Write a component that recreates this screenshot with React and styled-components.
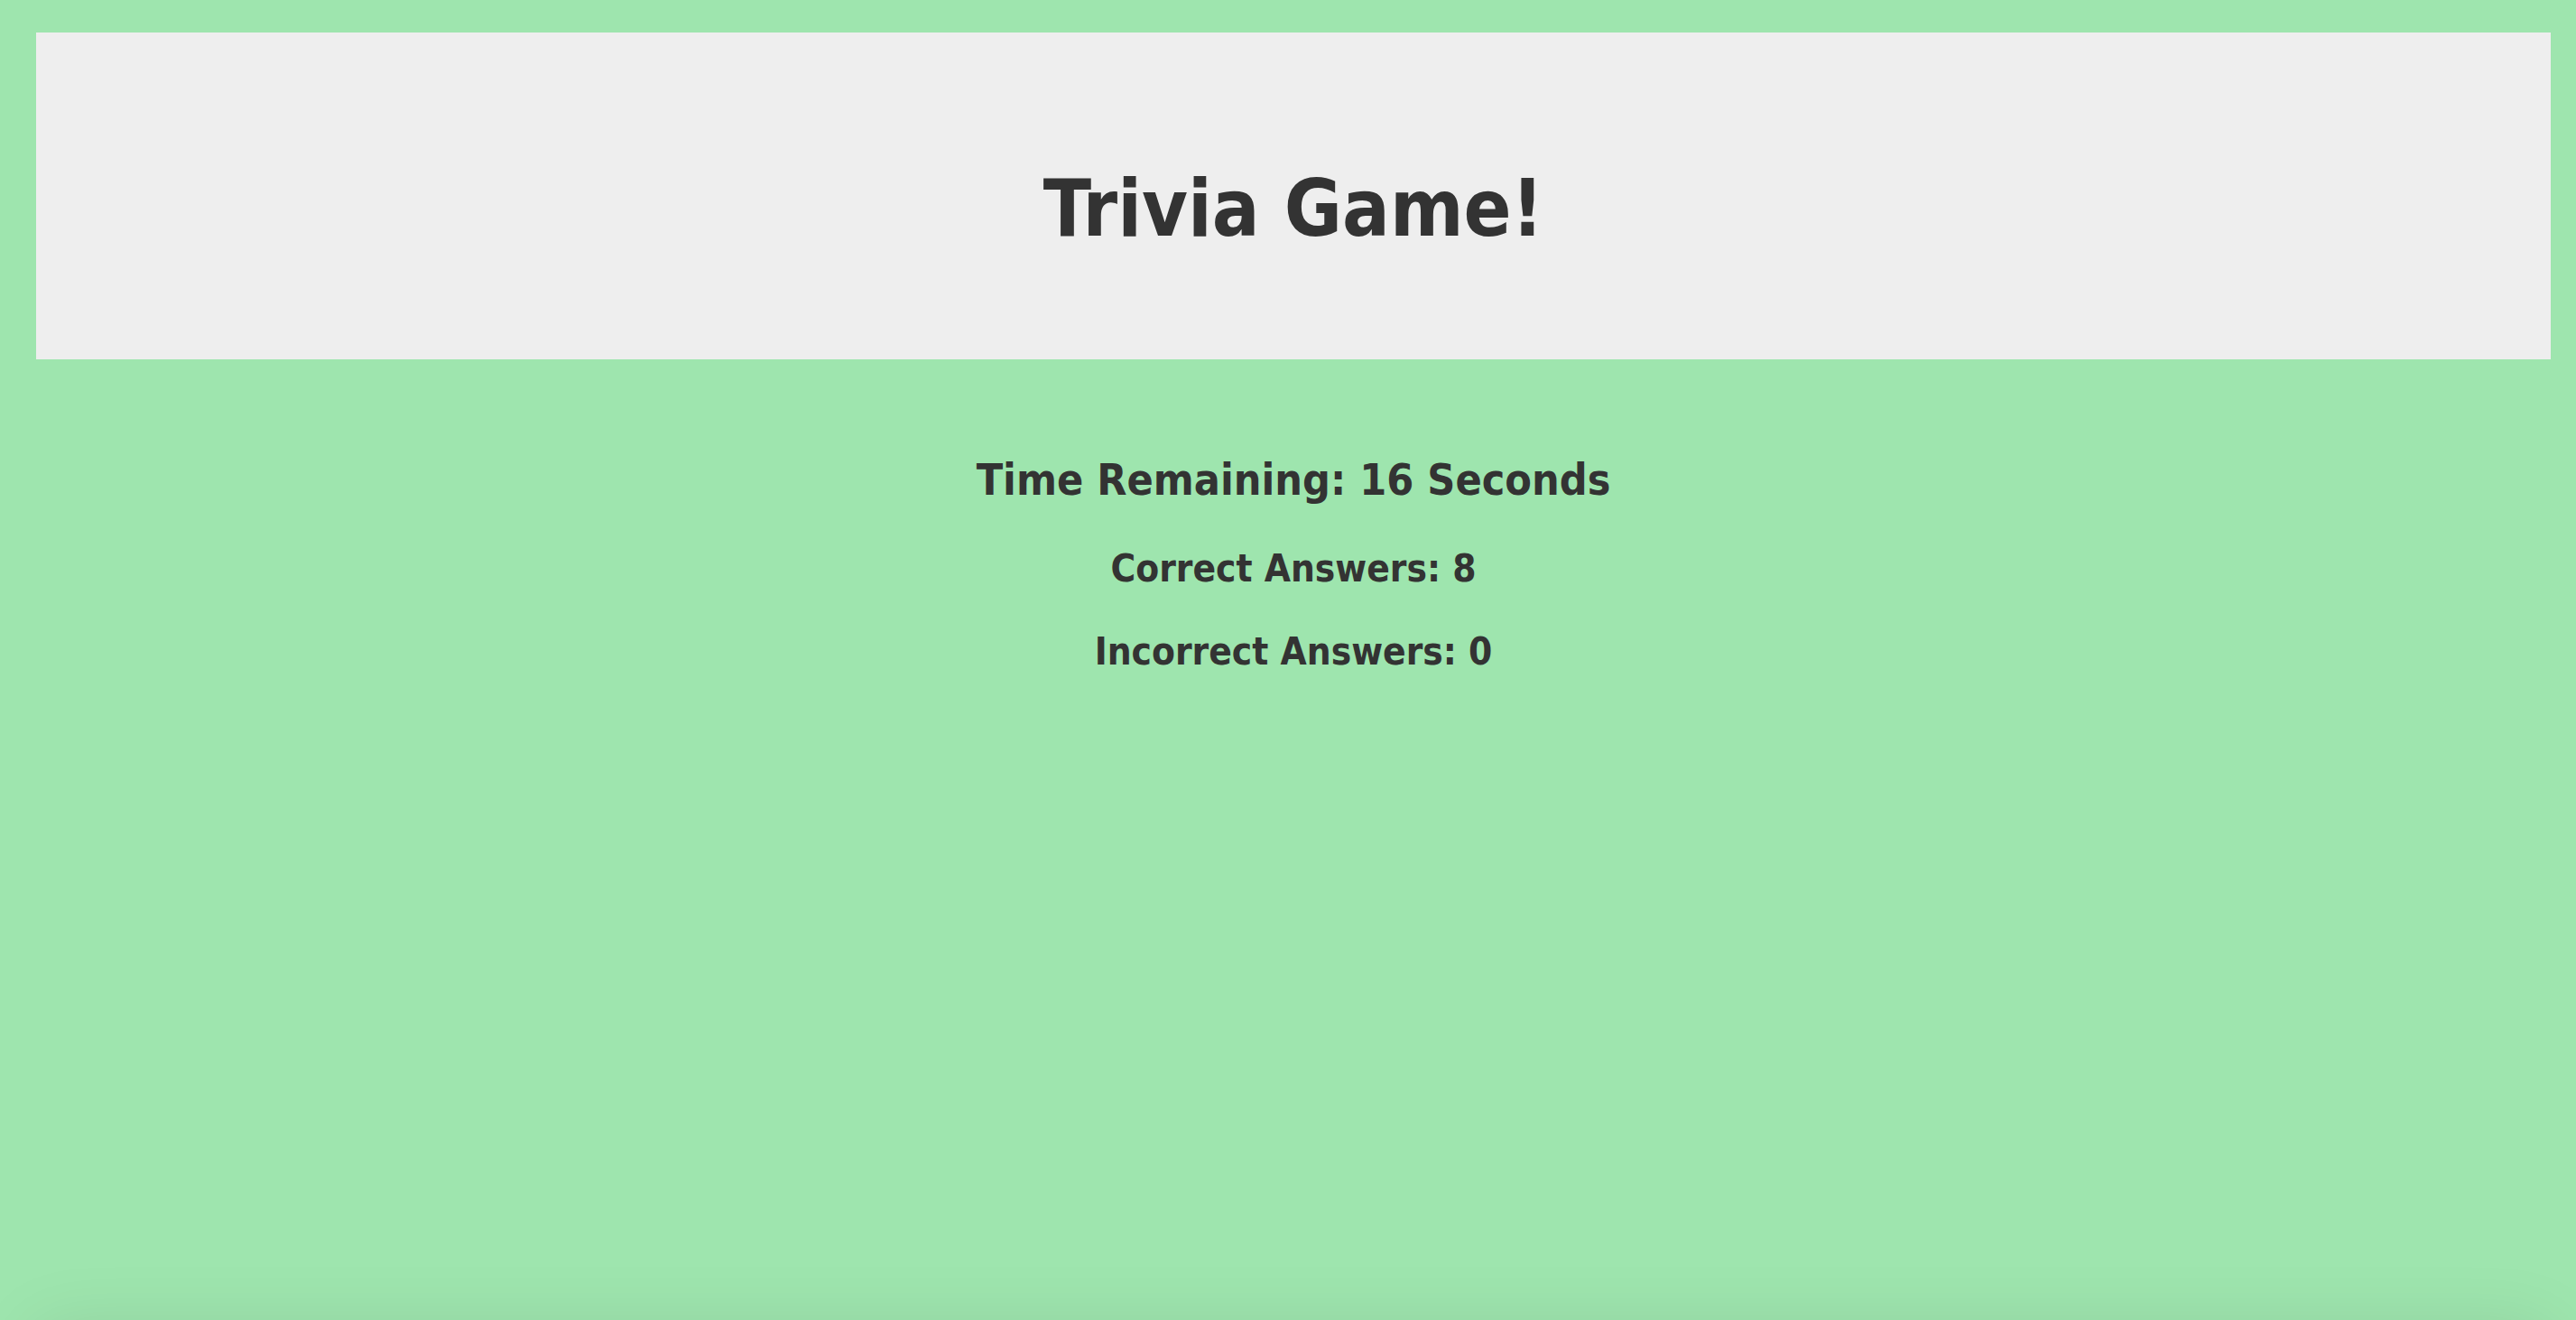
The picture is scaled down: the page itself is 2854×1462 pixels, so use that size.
import React from "react";
import styled, { createGlobalStyle } from "styled-components";

const GlobalStyle = createGlobalStyle`
  html, body {
    margin: 0;
    padding: 0;
    background: #9ee5ae;
  }
  body {
    font-family: "DejaVu Sans Condensed", "Liberation Sans Narrow", "Liberation Sans", sans-serif;
    color: #333333;
  }
`;

const Page = styled.div`
  height: 100vh;
  overflow: hidden;
  background: #9ee5ae;
`;

const Content = styled.div`
  min-height: 100vh;
  display: flex;
  flex-direction: column;
`;

const Header = styled.header`
  margin: 36px 28px 0 40px;
  height: 362px;
  box-sizing: border-box;
  padding-top: 145px;
  background: #eeeeee;
  text-align: center;
`;

const Title = styled.h1`
  margin: 0;
  font-size: 87px;
  line-height: 100px;
  font-weight: 700;
  color: #333333;
`;

const Stats = styled.section`
  margin: 0 28px 0 40px;
  display: flex;
  flex-direction: column;
  align-items: center;
  text-align: center;
`;

const StatLine = styled.h2`
  margin: ${(p) => p.$top}px 0 0;
  font-size: ${(p) => p.$size}px;
  line-height: ${(p) => p.$lh}px;
  font-weight: 700;
  color: #333333;
`;

const Board = styled.div`
  margin: 10px 28px 0 40px;
  height: 400px;
  border-radius: 12px;
  background: #9ee5ae;
  box-shadow: 0 0 80px rgba(0, 0, 0, 0.1);
`;

export default function App() {
  return (
    <>
      <GlobalStyle />
      <Page>
        <Content>
          <Header>
            <Title>Trivia Game!</Title>
          </Header>
          <Stats>
            <StatLine $top={105} $size={48} $lh={56}>
              Time Remaining: 16 Seconds
            </StatLine>
            <StatLine $top={46} $size={42} $lh={50}>
              Correct Answers: 8
            </StatLine>
            <StatLine $top={42} $size={42} $lh={50}>
              Incorrect Answers: 0
            </StatLine>
          </Stats>
        </Content>
        <Board />
      </Page>
    </>
  );
}
